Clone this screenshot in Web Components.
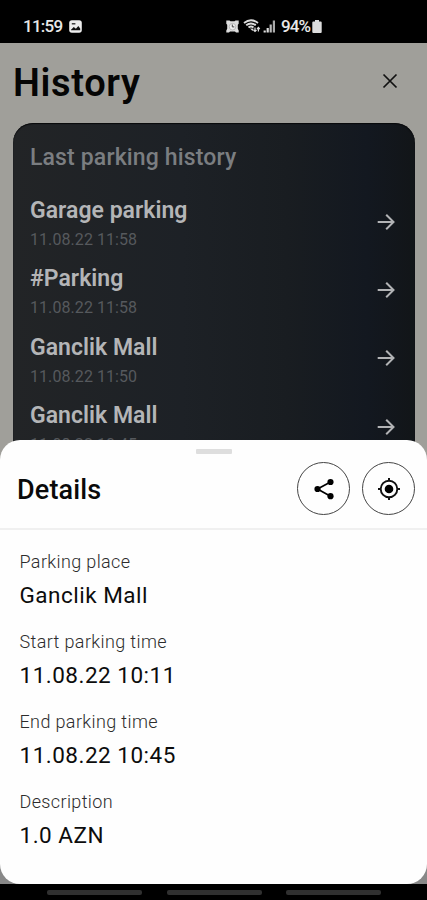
<!DOCTYPE html>
<html lang="en">
<head>
<meta charset="utf-8">
<title>Parking history</title>
<style>
  html, body { margin: 0; height: 100%; overflow: hidden; background: #000; }
  body { font-family: Roboto, "Liberation Sans", sans-serif; }
</style>
</head>
<body>
<parking-app></parking-app>
<script>
  const define = (name, html) => customElements.define(name, class extends HTMLElement {
    constructor() {
      super();
      const t = document.createElement('template');
      t.innerHTML = html;
      this.attachShadow({ mode: 'open' }).append(t.content.cloneNode(true));
    }
  });

  define('status-bar', `
    <style>
      :host { display: flex; align-items: center; height: 43px; padding: 9px 105px 0 23px; box-sizing: border-box;
        background: #000; color: #e8e8e8; font-size: 17px; font-weight: 500; line-height: 20px; }
      svg { display: block; flex: none; }
      .time { width: 46px; letter-spacing: -.75px; white-space: nowrap; }
      .grow { flex: 1; }
      .pct { margin-left: 5px; width: 31px; letter-spacing: -.9px; white-space: nowrap; }
    </style>
    <span class="time">11:59</span>
    <svg width="13" height="13" viewBox="0 0 13 13"><rect x=".2" y=".3" width="12.6" height="12.4" rx="2.6" fill="#eee"/><path d="M2 9.8 4.8 7l2.1 1.7L9.3 6l1.9 2.6v1.6H2z" fill="#111"/><path d="M2.8 3.8h3.6" stroke="#222" stroke-width="1.3"/></svg>
    <span class="grow"></span>
    <svg width="13" height="13" viewBox="0 0 13 13"><path d="M.3.5h3.2l1 .8h4L9.5.5h3.2v3.2l-.9 1v4l.9 1.8v2H10l-1-.9H4l-1 .9H.3v-2l.9-1.8v-4l-.9-1z" fill="#ddd"/><circle cx="6.5" cy="6.7" r="3.3" fill="#eee" stroke="#999" stroke-width=".6"/><path d="M6.3 4.5v2.4h2" stroke="#444" fill="none"/></svg>
    <svg style="margin-left:4px" width="18" height="14" viewBox="0 0 18 14"><path d="M1 4Q8 -1.500 15 4M3.200 6.300Q8 2.600 12.800 6.300M5.500 8.500Q8 6.600 10.500 8.500" fill="none" stroke="#ddd" stroke-width="1.900"/><path d="m7 9.500 2.500 2.500 1.200-2.200z" fill="#ddd"/><path d="M12 8.500v4M10.500 11l1.500 1.500 1.500-1.500M15.400 12.500v-4M14 10l1.400-1.500L16.800 10" fill="none" stroke="#ddd" stroke-width="1.200"/></svg>
    <svg style="margin-left:2px" width="13" height="13" viewBox="0 0 13 13"><path d="M1.700 12.500v-2M4.700 12.500V8" stroke="#ddd" stroke-width="2.200"/><path d="M7.700 12.500V4.500" stroke="#bbb" stroke-width="2.200"/><path d="M10.900 12.500V.5" stroke="#aaa" stroke-width="2.200"/></svg>
    <span class="pct">94%</span>
    <svg width="10" height="13" viewBox="0 0 10 13"><path d="M3 0h4v1.500h1.700q1 0 1 1V12q0 1-1 1H1.300q-1 0-1-1V2.500q0-1 1-1H3z" fill="#ddd"/></svg>
  `);

  define('page-header', `
    <style>
      :host { display: flex; justify-content: space-between; align-items: center; height: 80px; box-sizing: border-box;
        padding: 0 28px 0 13px; color: #050505; }
      h1 { margin: 0; font-size: 38px; line-height: 44px; font-weight: 600; letter-spacing: .65px; }
      svg { margin-top: -4px; }
    </style>
    <h1><slot></slot></h1>
    <svg width="18" height="18" viewBox="0 0 18 18"><path d="m2.500 2.500 13 13m0-13-13 13" stroke="#111" stroke-width="1.700" fill="none"/></svg>
  `);

  define('history-item', `
    <style>
      :host { display: flex; justify-content: space-between; align-items: center; height: 68.300px; }
      .name { color: #b4b5b7; font-size: 23px; line-height: 27px; font-weight: 600; white-space: nowrap; letter-spacing: .03px; }
      .date { color: #56595d; font-size: 16px; line-height: 19px; margin-top: 6px; white-space: nowrap; letter-spacing: .07px; }
      svg { margin: -3px 1px 0 0; }
    </style>
    <div><div class="name"><slot></slot></div><div class="date"><slot name="date"></slot></div></div>
    <svg width="20" height="20" viewBox="0 0 20 20"><path d="M1.700 10h15.800M10.200 2.700 17.500 10l-7.300 7.300" fill="none" stroke="#b2b3b5" stroke-width="2"/></svg>
  `);

  define('history-card', `
    <style>
      :host { display: block; margin: 0 12px 0 13px; height: 340px; box-sizing: border-box; padding: 21px 18px 0 17px;
        border-radius: 20px 20px 0 0; background: linear-gradient(90deg, #222426, #1d2126 42%, #191d21 68%, #131820 88%, #121518);
        box-shadow: inset 0 1px 1px #08090b; overflow: hidden; }
      h2 { margin: 0 0 18px; color: #7b7e81; font-size: 23px; line-height: 27px; font-weight: 500; letter-spacing: .15px; }
    </style>
    <h2><slot name="title"></slot></h2>
    <slot></slot>
  `);

  define('round-button', `
    <style>
      :host { display: grid; place-items: center; width: 53px; height: 53px; box-sizing: border-box; border: 1.200px solid #444; border-radius: 50%; }
    </style>
    <slot></slot>
  `);

  define('detail-field', `
    <style>
      :host { display: block; height: 80px; white-space: nowrap; }
      .label { color: #2c2c2c; font-size: 18px; line-height: 22px; font-weight: 300; letter-spacing: .37px; }
      .value { color: #0c0c0c; font-size: 22.500px; line-height: 28px; margin-top: 8.400px; letter-spacing: .5px; }
    </style>
    <div class="label"><slot name="label"></slot></div>
    <div class="value"><slot></slot></div>
  `);

  define('details-sheet', `
    <style>
      :host { display: block; position: absolute; left: 0; right: 0; top: 440px; height: 444px; background: #fefefe; border-radius: 20px; overflow: hidden; }
      .grip { width: 36px; height: 5px; margin: 9px auto 0; background: #dedede; border-radius: 1px; }
      header { display: flex; align-items: center; gap: 12px; height: 76px; box-sizing: border-box; padding: 0 12px 5px 17px; border-bottom: 2px solid #f0f0f0; }
      h2 { flex: 1; margin: 3px 0 0; font-size: 27px; line-height: 32px; font-weight: 500; color: #0a0a0a; letter-spacing: .15px; }
      .fields { padding: 21px 19px 0 19.500px; }
    </style>
    <div class="grip"></div>
    <header>
      <h2>Details</h2>
      <round-button><svg width="24" height="24" viewBox="0 0 24 24"><path d="M18.500 5 5.500 12l13 7.200" fill="none" stroke="#000" stroke-width="1.700"/><circle cx="18.500" cy="5" r="3.100"/><circle cx="5.500" cy="12" r="3.100"/><circle cx="18.500" cy="19.200" r="3.100"/></svg></round-button>
      <round-button><svg width="24" height="24" viewBox="0 0 24 24"><circle cx="12" cy="12" r="8.300" fill="none" stroke="#111" stroke-width="1.900"/><circle cx="12" cy="12" r="4.300"/><path d="M12 1v3m0 16v3M1 12h3m16 0h3" stroke="#111" stroke-width="2"/></svg></round-button>
    </header>
    <div class="fields"><slot></slot></div>
  `);

  define('nav-bar', `
    <style>
      :host { display: flex; position: absolute; left: 0; right: 0; bottom: 0; height: 16px; box-sizing: border-box; padding: 6px 46px 0 47px; justify-content: space-between; background: #000; }
      i { width: 95px; height: 5px; border-radius: 2px; background: #303030; }
    </style>
    <i></i><i></i><i></i>
  `);

  define('parking-app', `
    <style>
      :host { display: block; position: relative; width: 427px; height: 900px; overflow: hidden; background: linear-gradient(#a09f9a 0 450px, #888 650px); }
    </style>
    <status-bar></status-bar>
    <page-header>History</page-header>
    <history-card>
      <span slot="title">Last parking history</span>
      <history-item>Garage parking<span slot="date">11.08.22 11:58</span></history-item>
      <history-item>#Parking<span slot="date">11.08.22 11:58</span></history-item>
      <history-item>Ganclik Mall<span slot="date">11.08.22 11:50</span></history-item>
      <history-item>Ganclik Mall<span slot="date">11.08.22 10:45</span></history-item>
    </history-card>
    <details-sheet>
      <detail-field><span slot="label">Parking place</span>Ganclik Mall</detail-field>
      <detail-field><span slot="label">Start parking time</span>11.08.22 10:11</detail-field>
      <detail-field><span slot="label">End parking time</span>11.08.22 10:45</detail-field>
      <detail-field><span slot="label">Description</span>1.0 AZN</detail-field>
    </details-sheet>
    <nav-bar></nav-bar>
  `);
</script>
</body>
</html>
